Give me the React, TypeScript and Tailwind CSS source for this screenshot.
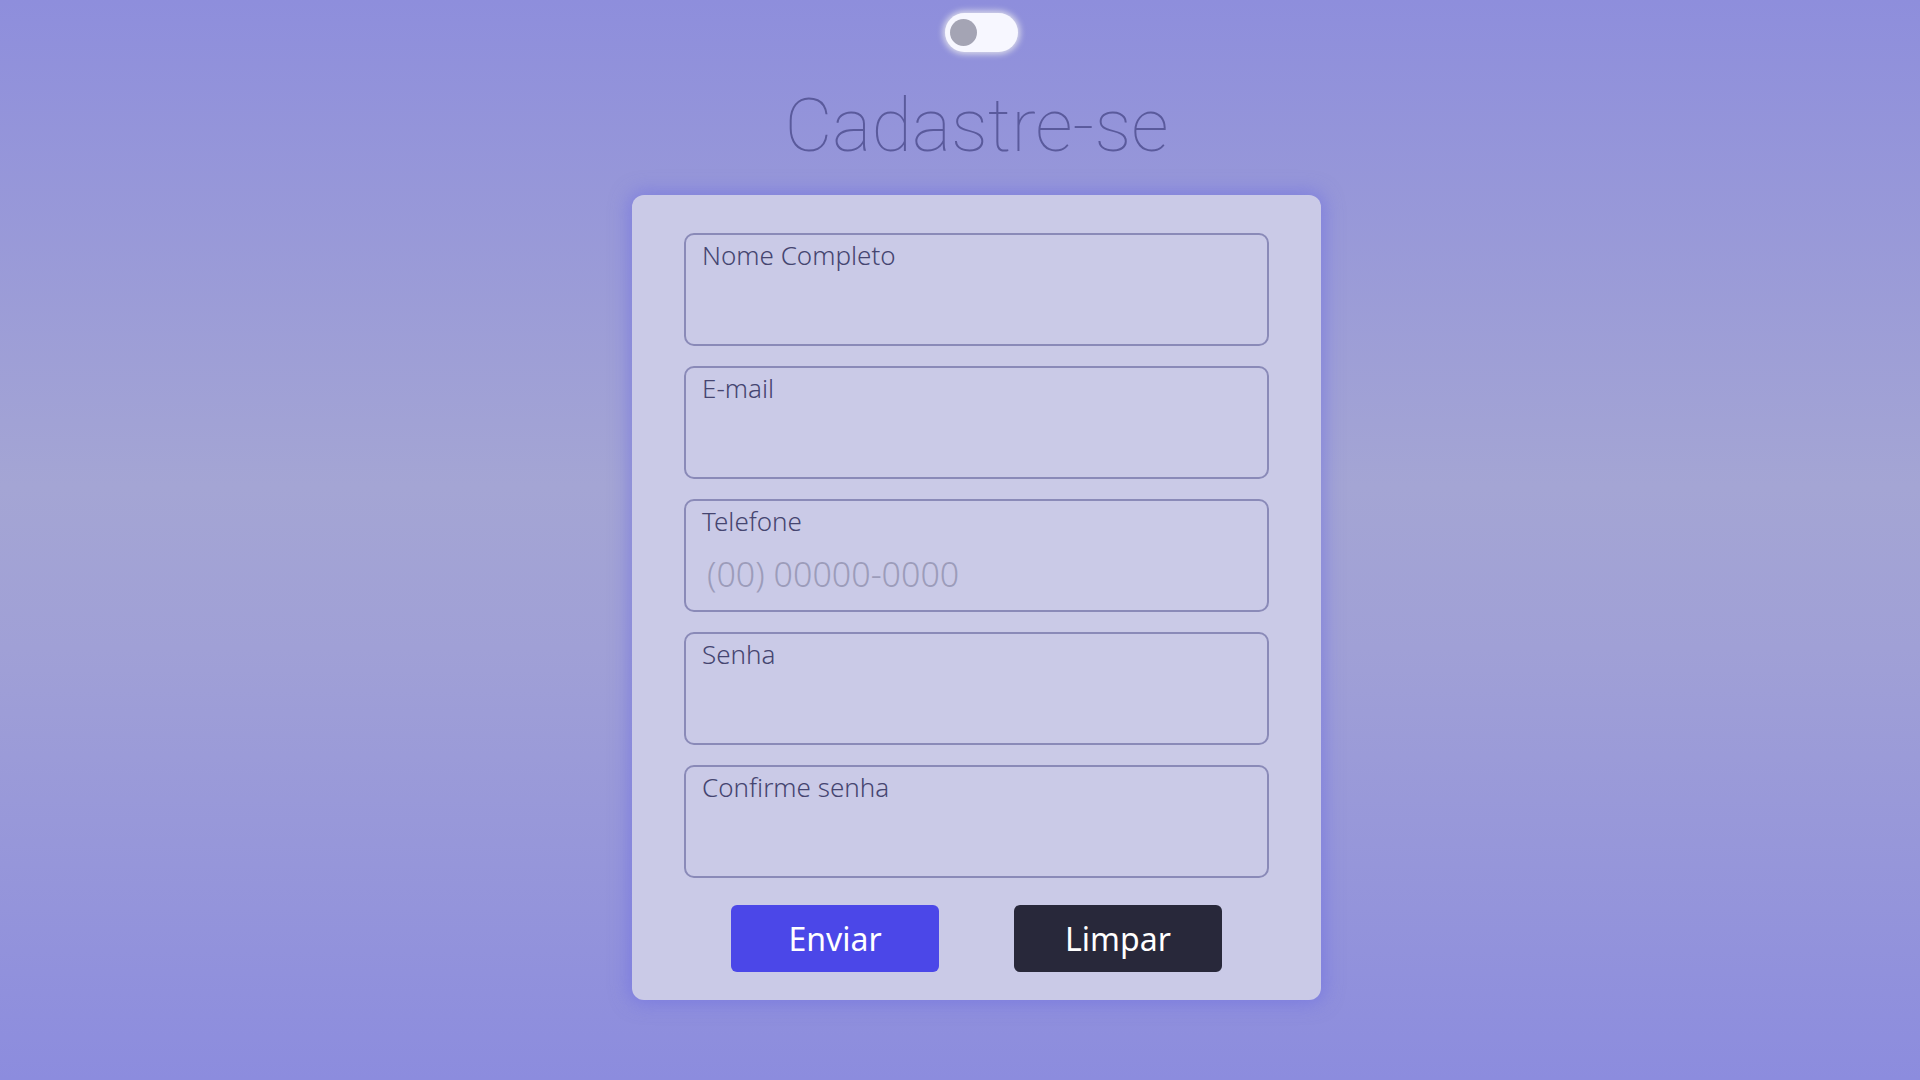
import React from "react";

const fields = [
  { label: "Nome Completo", placeholder: "" },
  { label: "E-mail", placeholder: "" },
  { label: "Telefone", placeholder: "(00) 00000-0000" },
  { label: "Senha", placeholder: "" },
  { label: "Confirme senha", placeholder: "" },
];

function Field({ label, placeholder }: { label: string; placeholder: string }) {
  return (
    <label className="flex h-[113px] w-[585px] flex-col rounded-[10px] border-2 border-[#8a8ab8] px-[16px] pt-[2px]">
      <span className="text-[26px] font-light leading-[36px] text-[#454570]">{label}</span>
      <input
        placeholder={placeholder}
        className="mt-[10px] w-full bg-transparent pl-[5px] text-[34px] font-light text-[#4b4b78] outline-none placeholder:text-[#9c9cba]"
      />
    </label>
  );
}

export default function App() {
  return (
    <div className="flex min-h-screen flex-col items-center bg-[linear-gradient(to_bottom,#8e8edc_0%,#a4a5d4_45%,#a0a0d6_60%,#8c8cde_100%)] pl-[33px] font-['Noto_Sans',sans-serif]">
      {/* theme toggle */}
      <button className="mt-[13px] ml-[10px] flex h-[39px] w-[73px] items-center rounded-full bg-[#f7f7ff] pl-[5px] shadow-[0_0_6px_2px_rgba(255,255,240,0.7)]">
        <span className="h-[27px] w-[27px] rounded-full bg-[#a4a4b4]" />
      </button>

      <h1 className="mt-[36px] font-['Roboto',sans-serif] text-[74px] font-thin leading-[76px] text-[#5a5a9c]">
        Cadastre-se
      </h1>

      <form className="mt-[31px] flex w-[689px] flex-col items-center rounded-[12px] bg-[#cacae7] px-[52px] pt-[38px] pb-[28px] shadow-[0_0_18px_4px_rgba(110,110,225,0.55)]">
        <div className="flex flex-col gap-[20px]">
          {fields.map((f) => (
            <Field key={f.label} label={f.label} placeholder={f.placeholder} />
          ))}
        </div>

        <div className="mt-[27px] flex gap-[75px]">
          <button
            type="button"
            className="h-[67px] w-[208px] rounded-[6px] bg-[#4b47e8] text-[32px] text-white"
          >
            Enviar
          </button>
          <button
            type="button"
            className="h-[67px] w-[208px] rounded-[6px] bg-[#28283a] text-[32px] text-white"
          >
            Limpar
          </button>
        </div>
      </form>
    </div>
  );
}
